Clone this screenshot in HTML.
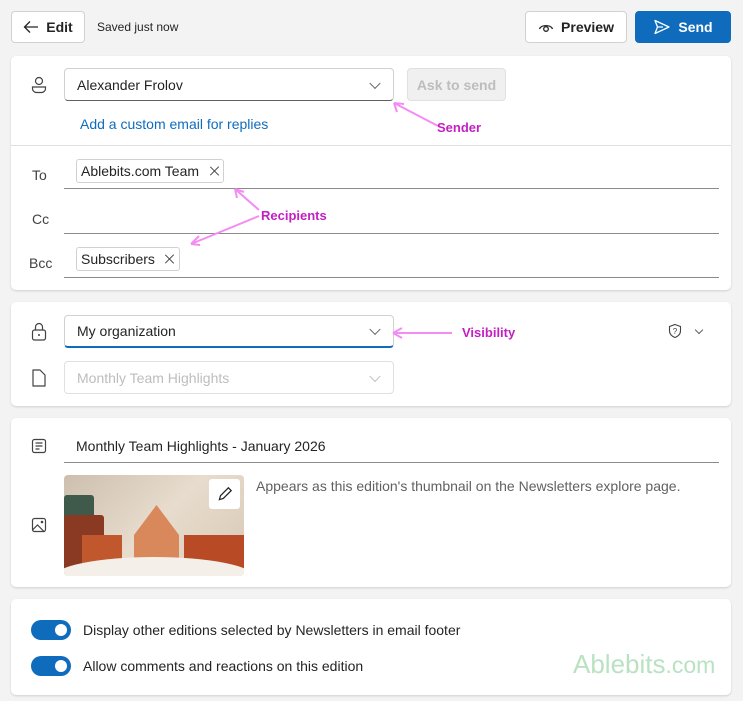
<!DOCTYPE html>
<html><head><style>
*{box-sizing:border-box;margin:0;padding:0}
body{width:743px;height:701px;background:#f3f3f3;font-family:"Liberation Sans",sans-serif;color:#242424;position:relative;overflow:hidden;font-size:14px}
.a{position:absolute}
.card{position:absolute;left:11px;width:720px;background:#fff;border-radius:5px;box-shadow:0 1px 2px rgba(0,0,0,.15)}
.btn{position:absolute;background:#fff;border:1px solid #d1d1d1;border-radius:4px;font-weight:bold;font-size:14px;display:flex;align-items:center;justify-content:center;gap:7px}
.sel{position:absolute;border:1px solid #d1d1d1;border-radius:4px;background:#fff;padding-left:12px;display:flex;align-items:center;font-size:14px}
.chev{position:absolute;right:14px;top:50%;width:8px;height:8px;border-right:1.3px solid #616161;border-bottom:1.3px solid #616161;transform:translateY(-70%) rotate(45deg)}
.line{position:absolute;height:1px;background:#8a8a8a}
.lbl{position:absolute;font-size:14px;color:#424242}
.chip{position:absolute;border:1px solid #d1d1d1;border-radius:3px;padding:0 4px;height:24px;display:flex;align-items:center;font-size:14px;gap:10px}
.x{width:10px;height:10px;position:relative}
.x:before,.x:after{content:"";position:absolute;left:4.5px;top:-1px;width:1.2px;height:12px;background:#424242;transform:rotate(45deg)}
.x:after{transform:rotate(-45deg)}
.pink{position:absolute;color:#c31fc3;font-weight:bold;font-size:13px}
.tog{position:absolute;width:40px;height:20px;border-radius:10px;background:#0f6cbd}
.tog:after{content:"";position:absolute;right:4px;top:4px;width:12px;height:12px;border-radius:50%;background:#fff}
</style></head><body>
<div class="btn" style="left:11px;top:11px;width:74px;height:32px"><svg width="16" height="14" viewBox="0 0 16 14"><path d="M15 7H2M7 1.5L1.5 7 7 12.5" fill="none" stroke="#242424" stroke-width="1.3"/></svg>Edit</div>
<div class="a" style="left:97px;top:20px;font-size:12px">Saved just now</div>
<div class="btn" style="left:525px;top:11px;width:102px;height:32px"><svg width="16" height="14" viewBox="0 0 16 14"><path d="M1.5 9C3 4.5 13 4.5 14.5 9" fill="none" stroke="#242424" stroke-width="1.3"/><circle cx="8" cy="9" r="2.3" fill="none" stroke="#242424" stroke-width="1.3"/></svg>Preview</div>
<div class="btn" style="left:635px;top:11px;width:96px;height:32px;background:#0f6cbd;border-color:#0f6cbd;color:#fff"><svg width="18" height="16" viewBox="0 0 18 16"><path d="M2 1.5L16 8 2 14.5 4.5 8z M4.5 8H10" fill="none" stroke="#fff" stroke-width="1.3" stroke-linejoin="round"/></svg>Send</div>

<div class="card" style="top:56px;height:234px"></div>
<svg class="a" style="left:30px;top:76px" width="18" height="18" viewBox="0 0 18 18"><circle cx="9" cy="5" r="3.5" fill="none" stroke="#424242" stroke-width="1.2"/><path d="M2.5 11h13v1.5a4 4 0 0 1-4 4h-5a4 4 0 0 1-4-4z" fill="none" stroke="#424242" stroke-width="1.2"/></svg>
<div class="sel" style="left:64px;top:68px;width:330px;height:33px;border-bottom-color:#616161">Alexander Frolov<span class="chev"></span></div>
<div class="a" style="left:407px;top:68px;width:99px;height:33px;background:#f0f0f0;border:1px solid #e0e0e0;border-radius:4px;color:#bdbdbd;font-weight:bold;font-size:14px;display:flex;align-items:center;justify-content:center">Ask to send</div>
<div class="a" style="left:80px;top:116px;color:#0f6cbd;font-size:14px">Add a custom email for replies</div>
<svg class="a" style="left:390px;top:100px" width="50" height="30"><path d="M48 26L4 3M4 3l3 9M4 3l10 1" stroke="#f48cf4" stroke-width="2" fill="none"/></svg>
<div class="pink" style="left:437px;top:120px">Sender</div>
<div class="a" style="left:11px;top:145px;width:720px;height:1px;background:#e0e0e0"></div>
<div class="lbl" style="left:32px;top:167px">To</div>
<div class="chip" style="left:76px;top:159px">Ablebits.com Team <span class="x"></span></div>
<div class="line" style="left:64px;top:188px;width:655px"></div>
<div class="lbl" style="left:32px;top:211px">Cc</div>
<div class="line" style="left:64px;top:233px;width:655px"></div>
<div class="lbl" style="left:29px;top:255px">Bcc</div>
<div class="chip" style="left:76px;top:247px">Subscribers <span class="x"></span></div>
<div class="line" style="left:64px;top:277px;width:655px"></div>
<svg class="a" style="left:185px;top:186px" width="80" height="62"><path d="M74 24L50 3M50 3l2 9M50 3l9 3M74 30L6 58M6 58l8-8M6 58l9 1" stroke="#f48cf4" stroke-width="2" fill="none"/></svg>
<div class="pink" style="left:261px;top:208px">Recipients</div>

<div class="card" style="top:302px;height:104px"></div>
<svg class="a" style="left:31px;top:322px" width="16" height="20" viewBox="0 0 16 20"><path d="M4.5 8V5a3.5 3.5 0 0 1 7 0v3" fill="none" stroke="#424242" stroke-width="1.2"/><rect x="1.5" y="8" width="13" height="10" rx="2" fill="none" stroke="#424242" stroke-width="1.2"/><circle cx="8" cy="13" r="1" fill="#424242"/></svg>
<div class="sel" style="left:64px;top:315px;width:330px;height:33px;border-bottom:2px solid #0f6cbd">My organization<span class="chev"></span></div>
<svg class="a" style="left:390px;top:325px" width="70" height="16"><path d="M62 8H3M3 8l9-5M3 8l9 5" stroke="#f48cf4" stroke-width="2" fill="none"/></svg>
<div class="pink" style="left:462px;top:325px">Visibility</div>
<svg class="a" style="left:668px;top:323px" width="14" height="16" viewBox="0 0 14 16"><path d="M7 1.5L12.5 3.5V8c0 3-2.5 5.5-5.5 6.5C4 13.5 1.5 11 1.5 8V3.5z" fill="none" stroke="#424242" stroke-width="1.1"/><text x="7" y="11" font-size="8" text-anchor="middle" fill="#424242" font-family="Liberation Sans">?</text></svg>
<div class="a" style="left:696px;top:327px;width:6px;height:6px;border-right:1.2px solid #616161;border-bottom:1.2px solid #616161;transform:rotate(45deg)"></div>
<svg class="a" style="left:31px;top:368px" width="16" height="20" viewBox="0 0 16 20"><path d="M2 2h7l5 5v11H2z" fill="none" stroke="#424242" stroke-width="1.2" stroke-linejoin="round"/></svg>
<div class="sel" style="left:64px;top:361px;width:330px;height:33px;color:#bdbdbd;border-color:#e0e0e0">Monthly Team Highlights<span class="chev" style="border-color:#bdbdbd"></span></div>

<div class="card" style="top:418px;height:169px"></div>
<svg class="a" style="left:31px;top:438px" width="16" height="16" viewBox="0 0 16 16"><rect x="1.5" y="1.5" width="13" height="13" rx="2" fill="none" stroke="#424242" stroke-width="1.2"/><path d="M4.5 5h7M4.5 8h7M4.5 11h4" stroke="#424242" stroke-width="1.2"/></svg>
<div class="a" style="left:76px;top:438px;font-size:14px">Monthly Team Highlights - January 2026</div>
<div class="line" style="left:64px;top:462px;width:655px"></div>
<svg class="a" style="left:31px;top:517px" width="16" height="16" viewBox="0 0 16 16"><rect x="1.5" y="1.5" width="13" height="13" rx="2" fill="none" stroke="#424242" stroke-width="1.2"/><path d="M1.5 13l5-5 7 7" fill="none" stroke="#424242" stroke-width="1.2"/><circle cx="11" cy="5" r="1.3" fill="#424242"/></svg>
<div class="a" style="left:64px;top:475px;width:180px;height:101px;border-radius:4px;overflow:hidden;background:linear-gradient(135deg,#cdbfae,#e7dccd 50%,#d8c8b4)">
<div class="a" style="left:0;top:20px;width:30px;height:60px;background:#3f5a4a;border-radius:3px"></div>
<div class="a" style="left:0;top:40px;width:40px;height:60px;background:#8a3a22;border-radius:3px"></div>
<div class="a" style="left:18px;top:60px;width:40px;height:35px;background:#c0572d"></div>
<div class="a" style="left:70px;top:30px;width:45px;height:60px;background:#d8885a;clip-path:polygon(50% 0,100% 50%,100% 100%,0 100%,0 50%)"></div>
<div class="a" style="left:120px;top:60px;width:60px;height:35px;background:#b84a26"></div>
<div class="a" style="left:-10px;top:82px;width:200px;height:40px;background:#f4efe8;border-radius:50%"></div>
<div class="a" style="left:145px;top:4px;width:31px;height:30px;background:#fff;border-radius:3px;display:flex;align-items:center;justify-content:center"><svg width="18" height="18" viewBox="0 0 16 16"><path d="M3 13l1-3.5L11 2.5l2.5 2.5L6.5 12z" fill="none" stroke="#242424" stroke-width="1.1"/></svg></div>
</div>
<div class="a" style="left:256px;top:478px;font-size:14px;color:#616161">Appears as this edition's thumbnail on the Newsletters explore page.</div>

<div class="card" style="top:599px;height:96px"></div>
<div class="tog" style="left:31px;top:620px"></div>
<div class="a" style="left:83px;top:622px;font-size:14px">Display other editions selected by Newsletters in email footer</div>
<div class="tog" style="left:31px;top:656px"></div>
<div class="a" style="left:83px;top:658px;font-size:14px">Allow comments and reactions on this edition</div>
<div class="a" style="left:573px;top:649px;font-size:26px;color:#b9e2c2">Ablebits<span style="font-size:23px">.com</span></div>
</body></html>
